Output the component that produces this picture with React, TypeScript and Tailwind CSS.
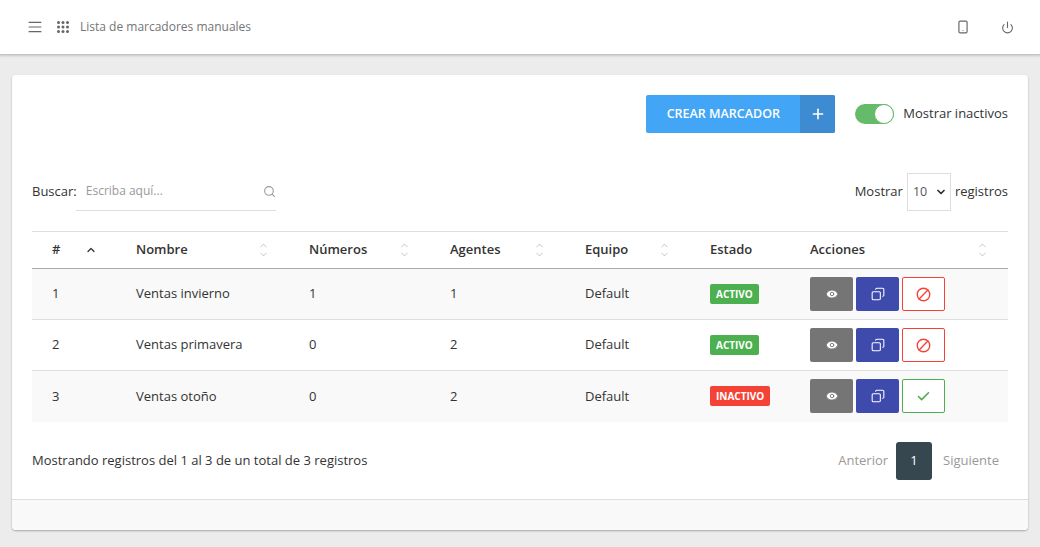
import { Ban, Check, ChevronDown, ChevronUp, Copy, Eye, Menu, Plus, Power, Search, Smartphone } from "lucide-react";

interface Row {
  id: number;
  name: string;
  numbers: number;
  agents: number;
  active: boolean;
}

const rows: Row[] = [
  { id: 1, name: "Ventas invierno", numbers: 1, agents: 1, active: true },
  { id: 2, name: "Ventas primavera", numbers: 0, agents: 2, active: true },
  { id: 3, name: "Ventas otoño", numbers: 0, agents: 2, active: false },
];

function SortIcon() {
  return (
    <span className="absolute right-[20px] top-1/2 -translate-y-1/2 flex flex-col items-center text-[#aaaaaa]">
      <ChevronUp size={11} strokeWidth={1.5} className="-mb-[2px]" />
      <ChevronDown size={11} strokeWidth={1.5} />
    </span>
  );
}

function GridIcon() {
  return (
    <svg width="12" height="12" viewBox="0 0 12 12" fill="#666666">
      {[1.5, 6, 10.5].map((y) =>
        [1.5, 6, 10.5].map((x) => <circle key={`${x}-${y}`} cx={x} cy={y} r="1.5" />)
      )}
    </svg>
  );
}

function HeaderCell({ label, sort = true }: { label: string; sort?: boolean }) {
  return (
    <th className="relative px-5 h-[37px] text-left font-semibold text-[13px] text-[#333333]">
      {label}
      {sort && <SortIcon />}
    </th>
  );
}

function ActionButtons({ active }: { active: boolean }) {
  return (
    <div className="flex gap-[3px]">
      <button className="w-[43px] h-[34px] rounded-[2px] bg-[#757575] text-white flex items-center justify-center">
        <Eye size={14} fill="white" stroke="#757575" strokeWidth={1.6} />
      </button>
      <button className="w-[43px] h-[34px] rounded-[2px] bg-[#3f4aad] text-white flex items-center justify-center">
        <Copy size={14} strokeWidth={1.8} className="-scale-x-100" />
      </button>
      {active ? (
        <button className="w-[43px] h-[34px] rounded-[2px] bg-white border border-[#f44336] text-[#f44336] flex items-center justify-center">
          <Ban size={15} strokeWidth={2.2} className="-scale-x-100 rotate-0" />
        </button>
      ) : (
        <button className="w-[43px] h-[34px] rounded-[2px] bg-white border border-[#4caf50] text-[#4caf50] flex items-center justify-center">
          <Check size={15} strokeWidth={2.6} />
        </button>
      )}
    </div>
  );
}

export default function App() {
  return (
    <div className="min-h-[547px] bg-[#ececec] font-['Open_Sans',sans-serif] text-[13px] text-[#333333] flex flex-col">
      {/* Top bar */}
      <header className="h-[55px] bg-white border-b border-[#c4c4c4] shadow-[0_1px_2px_rgba(0,0,0,0.15)] flex items-center pl-[27px] pr-[26px]">
        <Menu size={16} strokeWidth={1.8} className="text-[#666666] scale-x-110" />
        <span className="ml-[14px]">
          <GridIcon />
        </span>
        <span className="ml-[11px] text-[#757575] text-[12px]">Lista de marcadores manuales</span>
        <div className="ml-auto flex items-center gap-[31px]">
          <Smartphone size={14} strokeWidth={2} className="text-[#666666]" />
          <Power size={13} strokeWidth={2} className="text-[#666666]" />
        </div>
      </header>

      {/* Card */}
      <main className="mx-[12px] mt-[20px] h-[455px] bg-white rounded-[4px] shadow-[0_1px_2px_rgba(0,0,0,0.3)] flex flex-col">
        <div className="flex-1 px-[20px] pt-[20px]">
          <div className="flex justify-end items-center">
            <button className="h-[38px] w-[189px] rounded-[2px] bg-[#42a5f5] text-white flex overflow-hidden">
              <span className="flex-1 h-full flex items-center justify-center font-semibold text-[12.5px]">CREAR MARCADOR</span>
              <span className="w-[35px] h-full bg-[#3d8bd0] flex items-center justify-center">
                <Plus size={16} strokeWidth={2.4} />
              </span>
            </button>
            <div className="ml-[20px] w-[39px] h-[20px] rounded-full bg-[#66bb6a] relative">
              <span className="absolute right-0 top-0 w-[20px] h-[20px] rounded-full bg-white border border-[#66bb6a]" />
            </div>
            <span className="ml-[9px]">Mostrar inactivos</span>
          </div>

          <div className="mt-[40px] flex justify-between items-center h-[38px]">
            <div className="flex items-center">
              <span>Buscar:</span>
              <div className="ml-[-1px] pl-[10px] relative w-[200px] h-[38px] border-b border-[#dddddd] flex items-center text-[12px] text-[#999999]">
                <span className="-translate-y-px">Escriba aquí...</span>
                <Search size={13} strokeWidth={2} className="absolute right-0 top-[12px] text-[#999999]" />
              </div>
            </div>
            <div className="flex items-center">
              <span>Mostrar</span>
              <div className="ml-[4px] w-[44px] h-[38px] border border-[#dddddd] flex items-center justify-between pl-[5px] pr-[3px] text-[12.5px] text-[#555555]">
                <span>10</span>
                <ChevronDown size={12} strokeWidth={3.5} className="text-[#333333]" />
              </div>
              <span className="ml-[4px]">registros</span>
            </div>
          </div>

          <table className="mt-[20px] w-full table-fixed border-collapse">
            <colgroup>
              <col className="w-[84px]" />
              <col className="w-[173px]" />
              <col className="w-[141px]" />
              <col className="w-[135px]" />
              <col className="w-[125px]" />
              <col className="w-[100px]" />
              <col />
            </colgroup>
            <thead>
              <tr className="border-t border-b border-t-[#dddddd] border-b-[#aaaaaa]">
                <th className="relative px-5 text-left font-semibold text-[13px] text-[#333333]">
                  #
                  <ChevronUp size={12} strokeWidth={2.5} className="absolute left-[53px] top-[12px] text-[#333333]" />
                </th>
                <HeaderCell label="Nombre" />
                <HeaderCell label="Números" />
                <HeaderCell label="Agentes" />
                <HeaderCell label="Equipo" />
                <HeaderCell label="Estado" sort={false} />
                <HeaderCell label="Acciones" />
              </tr>
            </thead>
            <tbody>
              {rows.map((row) => (
                <tr key={row.id} className="h-[51px] border-b border-[#dddddd] last:border-b-0 odd:bg-[#f9f9f9]">
                  <td className="px-5">{row.id}</td>
                  <td className="px-5">{row.name}</td>
                  <td className="px-5">{row.numbers}</td>
                  <td className="px-5">{row.agents}</td>
                  <td className="px-5">Default</td>
                  <td className="px-5">
                    <span
                      className={`inline-block rounded-[2px] px-[6px] h-[20px] leading-[20px] text-[10px] font-bold text-white ${
                        row.active ? "bg-[#4caf50]" : "bg-[#f44336]"
                      }`}
                    >
                      {row.active ? "ACTIVO" : "INACTIVO"}
                    </span>
                  </td>
                  <td className="px-5">
                    <ActionButtons active={row.active} />
                  </td>
                </tr>
              ))}
            </tbody>
          </table>

          <div className="mt-[20px] flex justify-between items-center h-[38px]">
            <span>Mostrando registros del 1 al 3 de un total de 3 registros</span>
            <div className="flex items-center text-[#999999]">
              <span className="mr-[8px]">Anterior</span>
              <span className="w-[36px] h-[38px] rounded-[3px] bg-[#37474f] text-white flex items-center justify-center">1</span>
              <span className="ml-[11px] mr-[9px]">Siguiente</span>
            </div>
          </div>
        </div>
        <div className="h-[31px] bg-[#f9f9f9] border-t border-[#dddddd] rounded-b-[4px]" />
      </main>
    </div>
  );
}
